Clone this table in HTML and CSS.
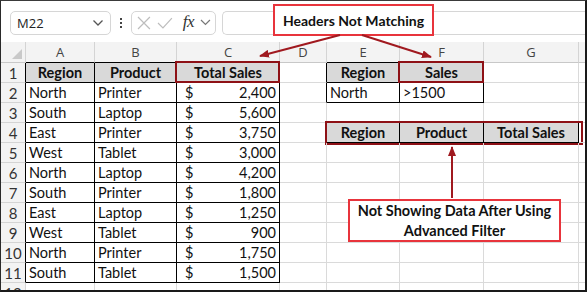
FILE: index.html
```html
<!DOCTYPE html>
<html>
<head>
<meta charset="utf-8">
<link rel="stylesheet" href="styles.css">
</head>
<body>
<div class="frame">
  <div class="fbar">
    <div class="namebox"><span>M22</span><svg class="chev" width="12" height="8" viewBox="0 0 12 8"><path d="M1.5 1.5 L6 6 L10.5 1.5" fill="none" stroke="#555" stroke-width="1.3"/></svg></div>
    <div class="dots"><i></i><i></i><i></i></div>
    <div class="fxbox">
      <svg width="14" height="14" viewBox="0 0 14 14"><path d="M1 1 L13 13 M13 1 L1 13" stroke="#bdbdbd" stroke-width="1.2"/></svg>
      <svg width="16" height="14" viewBox="0 0 16 14"><path d="M1 7 L6 12 L15 2" fill="none" stroke="#bdbdbd" stroke-width="1.2"/></svg>
      <span class="fx">fx</span>
      <svg width="11" height="7" viewBox="0 0 11 7"><path d="M1 1 L5.5 5.5 L10 1" fill="none" stroke="#777" stroke-width="1.2"/></svg>
    </div>
    <div class="finput"></div>
  </div>

  <div class="sheet">
    <div class="corner"><i></i></div>
    <div class="ch kb">A</div><div class="ch kb">B</div><div class="ch kb">C</div><div class="ch">D</div><div class="ch kb">E</div><div class="ch kb">F</div><div class="ch">G</div><div class="ch end"></div>

    <div class="rh kr">1</div><div class="c hd k">Region</div><div class="c hd k">Product</div><div class="c hd k red">Total Sales</div><div class="c kr"></div><div class="c hd k">Region</div><div class="c hd k red">Sales</div><div class="c"></div><div class="c end"></div>

    <div class="rh kr">2</div><div class="c k">North</div><div class="c k">Printer</div><div class="c k cur"><span>$</span><span>2,400</span></div><div class="c kr"></div><div class="c k">North</div><div class="c k">&gt;1500</div><div class="c"></div><div class="c end"></div>

    <div class="rh kr">3</div><div class="c k">South</div><div class="c k">Laptop</div><div class="c k cur"><span>$</span><span>5,600</span></div><div class="c"></div><div class="c kb"></div><div class="c kb"></div><div class="c kb"></div><div class="c end"></div>

    <div class="rh kr">4</div><div class="c k">East</div><div class="c k">Printer</div><div class="c k cur"><span>$</span><span>3,750</span></div><div class="c kr"></div><div class="c hd k redrange">Region</div><div class="c hd k">Product</div><div class="c hd k">Total Sales</div><div class="c end"></div>

    <div class="rh kr">5</div><div class="c k">West</div><div class="c k">Tablet</div><div class="c k cur"><span>$</span><span>3,000</span></div><div class="c"></div><div class="c"></div><div class="c"></div><div class="c"></div><div class="c end"></div>

    <div class="rh kr">6</div><div class="c k">North</div><div class="c k">Laptop</div><div class="c k cur"><span>$</span><span>4,200</span></div><div class="c"></div><div class="c"></div><div class="c"></div><div class="c"></div><div class="c end"></div>

    <div class="rh kr">7</div><div class="c k">South</div><div class="c k">Printer</div><div class="c k cur"><span>$</span><span>1,800</span></div><div class="c"></div><div class="c"></div><div class="c"></div><div class="c"></div><div class="c end"></div>

    <div class="rh kr">8</div><div class="c k">East</div><div class="c k">Laptop</div><div class="c k cur"><span>$</span><span>1,250</span></div><div class="c"></div><div class="c"></div><div class="c"></div><div class="c"></div><div class="c end"></div>

    <div class="rh kr">9</div><div class="c k">West</div><div class="c k">Tablet</div><div class="c k cur"><span>$</span><span>900</span></div><div class="c"></div><div class="c"></div><div class="c"></div><div class="c"></div><div class="c end"></div>

    <div class="rh kr">10</div><div class="c k">North</div><div class="c k">Printer</div><div class="c k cur"><span>$</span><span>1,750</span></div><div class="c"></div><div class="c"></div><div class="c"></div><div class="c"></div><div class="c end"></div>

    <div class="rh kr">11</div><div class="c k">South</div><div class="c k">Tablet</div><div class="c k cur"><span>$</span><span>1,500</span></div><div class="c"></div><div class="c"></div><div class="c"></div><div class="c"></div><div class="c end"></div>

    <div class="rh">12</div><div class="c"></div><div class="c"></div><div class="c"></div><div class="c"></div><div class="c"></div><div class="c"></div><div class="c"></div><div class="c end"></div>
  </div>

  <div class="callout c1">Headers Not Matching</div>
  <div class="callout c2">Not Showing Data After Using<br>Advanced Filter</div>

  <svg class="arrows" width="587" height="292" viewBox="0 0 587 292">
    <defs>
      <marker id="ah" markerWidth="10" markerHeight="8" refX="9" refY="4" orient="auto" markerUnits="userSpaceOnUse">
        <path d="M0 0 L10 4 L0 8 Z" fill="#a0191f"/>
      </marker>
    </defs>
    <line x1="340" y1="35" x2="260" y2="56" stroke="#a0191f" stroke-width="2" marker-end="url(#ah)"/>
    <line x1="362" y1="35" x2="431" y2="57" stroke="#a0191f" stroke-width="2" marker-end="url(#ah)"/>
    <line x1="452" y1="198" x2="452" y2="147" stroke="#a0191f" stroke-width="2" marker-end="url(#ah)"/>
  </svg>
</div>
</body>
</html>
```
FILE: styles.css
```css
* { box-sizing: border-box; }
html, body { margin: 0; padding: 0; background: #fff; }
.frame {
  position: relative;
  width: 587px;
  height: 292px;
  overflow: hidden;
  border-top: 1px solid #3a3a3a;
  border-left: 1px solid #2a2a2a;
  border-right: 2px solid #1a1a1a;
  border-bottom: 2px solid #1a1a1a;
  background: #fff;
  font-family: Lato, "Liberation Sans", sans-serif;
}
.fbar {
  height: 41px;
  display: flex;
  align-items: center;
  padding: 2px 0 0 9px;
  background: #fff;
}
.namebox {
  width: 101px;
  height: 24px;
  border: 1px solid #d6d6d6;
  border-radius: 5px;
  display: flex;
  align-items: center;
  justify-content: space-between;
  padding: 0 6px 0 6px;
  font-family: "Open Sans", "Liberation Sans", sans-serif;
  font-size: 13px;
  color: #222;
}
.dots {
  width: 20px;
  display: flex;
  flex-direction: column;
  align-items: center;
  gap: 2px;
}
.dots i { width: 2px; height: 2px; background: #444; display: block; }
.fxbox {
  width: 85px;
  height: 24px;
  border: 1px solid #d6d6d6;
  border-radius: 5px;
  display: flex;
  align-items: center;
  gap: 6px;
  padding: 0 4px 0 5px;
}
.fx {
  font-family: "Liberation Serif", serif;
  font-style: italic;
  font-size: 17px;
  color: #333;
  letter-spacing: -0.5px;
  margin-left: 4px;
  margin-top: -2px;
}
.finput {
  margin-left: 6px;
  flex: 1;
  height: 24px;
  border: 1px solid #d6d6d6;
  border-radius: 5px 0 0 5px;
  border-right: none;
}
.sheet {
  display: grid;
  grid-template-columns: 25px 69px 82px 103px 47px 73px 84px 95px 20px;
  grid-template-rows: 21px repeat(11, 20px) 20px;
}
.corner {
  background: #f3f3f3;
  border-right: 1px solid #d4d4d4;
  border-bottom: 1px solid #c8c8c8;
  position: relative;
}
.corner i {
  position: absolute;
  right: 3px;
  bottom: 3px;
  width: 0; height: 0;
  border-left: 10px solid transparent;
  border-bottom: 10px solid #c9c9c9;
}
.ch {
  background: #f3f3f3;
  border-right: 1px solid #d4d4d4;
  border-bottom: 1px solid #c8c8c8;
  text-align: center;
  font-family: "Open Sans", "Liberation Sans", sans-serif;
  font-size: 13px;
  line-height: 21px;
  color: #444;
}
.rh {
  background: #f3f3f3;
  border-right: 1px solid #d4d4d4;
  border-bottom: 1px solid #d4d4d4;
  text-align: center;
  font-size: 15px;
  line-height: 20px;
  color: #333;
}
.c {
  border-right: 1px solid #dadada;
  border-bottom: 1px solid #dadada;
  font-size: 14.5px;
  line-height: 19px;
  padding: 0 3px;
  color: #111;
  white-space: nowrap;
  position: relative;
}
.end { border-right: none; }
.k { border-right-color: #000; border-bottom-color: #000; }
.kr { border-right-color: #000; }
.kb { border-bottom-color: #000; }
.hd {
  background: #d9d9d9;
  font-weight: 700;
  text-align: center;
}
.cur {
  display: flex;
  justify-content: space-between;
  padding: 0 3px 0 8px;
}
.red::after {
  content: "";
  position: absolute;
  left: -2px; top: -2px; right: -1px; bottom: -1px;
  border: 2px solid #8e1116;
}
.redrange::after {
  content: "";
  position: absolute;
  left: -2px; top: -2px; bottom: -3px;
  width: 254px;
  border: 2.5px solid #8e1116;
}
.callout {
  position: absolute;
  background: #fff;
  border: 2px solid #e8343c;
  font-weight: 700;
  font-size: 14px;
  color: #111;
  text-align: center;
  display: flex;
  align-items: center;
  justify-content: center;
}
.c1 { left: 272px; top: 3px; width: 161px; height: 32px; }
.c2 { left: 347px; top: 198px; width: 213px; height: 43px; line-height: 20px; font-size: 14.5px; }
.arrows { position: absolute; left: -1px; top: -1px; pointer-events: none; }
```
